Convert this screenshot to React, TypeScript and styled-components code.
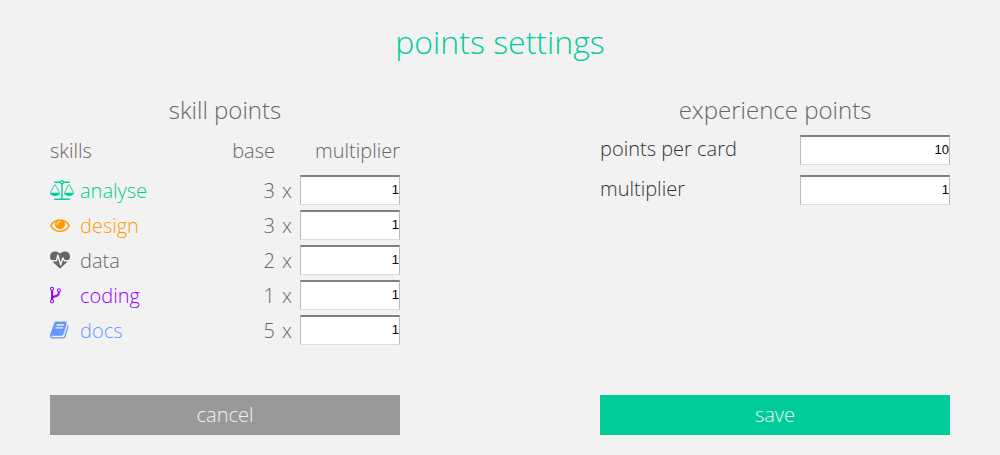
import React from 'react';
import styled, { createGlobalStyle } from 'styled-components';

const GlobalStyle = createGlobalStyle`
  * { box-sizing: border-box; }
  body {
    margin: 0;
    background: #f2f2f2;
    color: #666;
    font-family: "Open Sans", sans-serif;
    font-weight: 300;
    font-size: 20px;
    line-height: 28px;
  }
`;

const Page = styled.form`
  padding: 20px 50px;
`;

const Title = styled.h1`
  margin: 0 0 27px;
  color: #00cc99;
  font-size: 32px;
  font-weight: 300;
  line-height: 43px;
  text-align: center;
`;

const Columns = styled.div`
  display: grid;
  grid-template-columns: 1fr 1fr;
  column-gap: 200px;
`;

const Section = styled.section`
  min-height: 305px;
`;

const SectionTitle = styled.h2`
  margin: 0 0 5px;
  font-size: 24px;
  font-weight: 300;
  line-height: 40px;
  text-align: center;
`;

const Table = styled.table`
  width: 100%;
  border-collapse: collapse;
  table-layout: fixed;
  line-height: 32px;
`;

const Head = styled.th<{ $align?: string; $width?: number }>`
  width: ${({ $width }) => ($width ? `${$width}px` : 'auto')};
  height: 40px;
  padding: 0;
  font-weight: 300;
  text-align: ${({ $align }) => $align ?? 'left'};
  vertical-align: top;
`;

const Cell = styled.td`
  height: 35px;
  padding: 0;
  text-align: right;
  vertical-align: top;
`;

const Skill = styled.label<{ $color: string }>`
  display: grid;
  grid-template-columns: 30px 1fr;
  color: ${({ $color }) => $color};
  text-align: left;
`;

const Icon = styled.svg`
  height: 20px;
  margin-top: 5px;
  fill: currentColor;
`;

const Factor = styled.div`
  display: flex;
  justify-content: flex-end;
  gap: 8px;
`;

const NumberInput = styled.input<{ $width: number }>`
  display: block;
  width: ${({ $width }) => $width}px;
  height: 30px;
  margin: 0;
  padding: 0 0 2px;
  border: 1px solid #bbb;
  border-top: 2px solid #808080;
  border-bottom-color: #ddd;
  border-radius: 0;
  background: #fff;
  color: #000;
  font-family: "Liberation Sans", Arial, sans-serif;
  font-size: 13px;
  text-align: right;
`;

const Field = styled.div`
  display: flex;
  justify-content: space-between;
  margin-bottom: 10px;
  color: #333;
`;

const Button = styled.button<{ $color: string }>`
  height: 40px;
  padding: 0;
  border: 0;
  background: ${({ $color }) => $color};
  color: #f2f2f2;
  font: inherit;
  cursor: pointer;
`;

const skills = [
  {
    name: 'analyse',
    color: '#00cc99',
    base: 3,
    viewBox: '0 0 2176 1792',
    width: 24,
    path: 'M1728 448l-384 704h768zm-1280 0l-384 704h768zm821-192q-14 40-45.500 71.500t-71.500 45.500v1291h608q14 0 23 9t9 23v64q0 14-9 23t-23 9h-1344q-14 0-23-9t-9-23v-64q0-14 9-23t23-9h608v-1291q-40-14-71.500-45.500t-45.500-71.500h-491q-14 0-23-9t-9-23v-64q0-14 9-23t23-9h491q21-57 70-92.500t111-35.500 111 35.500 70 92.500h491q14 0 23 9t9 23v64q0 14-9 23t-23 9h-491zm-181 16q33 0 56.500-23.500t23.500-56.500-23.500-56.500-56.500-23.500-56.500 23.500-23.500 56.500 23.500 56.500 56.500 23.500zm1088 880q0 73-46.500 131t-117.500 91-144.500 49.500-139.500 16.500-139.500-16.500-144.500-49.500-117.500-91-46.500-131q0-11 35-81t92-174.500 107-195.500 102-184 56-100q18-33 56-33t56 33q4 7 56 100t102 184 107 195.500 92 174.500 35 81zm-1280 0q0 73-46.500 131t-117.500 91-144.500 49.500-139.500 16.500-139.500-16.500-144.500-49.500-117.500-91-46.500-131q0-11 35-81t92-174.500 107-195.500 102-184 56-100q18-33 56-33t56 33q4 7 56 100t102 184 107 195.500 92 174.500 35 81z',
  },
  {
    name: 'design',
    color: '#ff9900',
    base: 3,
    viewBox: '0 0 1792 1792',
    width: 20,
    path: 'M1664 960q-152-236-381-353 61 104 61 225 0 185-131.500 316.500t-316.500 131.500-316.500-131.500-131.500-316.500q0-121 61-225-229 117-381 353 133 205 333.500 326.500t434.500 121.500 434.500-121.500 333.500-326.500zm-720-384q0-20-14-34t-34-14q-125 0-214.500 89.500t-89.500 214.500q0 20 14 34t34 14 34-14 14-34q0-86 61-147t147-61q20 0 34-14t14-34zm848 384q0 34-20 69-140 230-376.500 368.500t-499.500 138.500-499.500-139-376.500-368q-20-35-20-69t20-69q140-229 376.500-368t499.500-139 499.500 139 376.500 368q20 35 20 69z',
  },
  {
    name: 'data',
    color: '#666666',
    base: 2,
    viewBox: '0 -128 1792 1792',
    width: 20,
    path: 'M1280 896h305q-5 6-10 10.500t-9 7.500l-3 4-623 600q-18 18-44 18t-44-18l-624-602q-5-2-21-20h369q22 0 39.500-13.500t22.500-34.500l70-281 190 667q6 20 23 33t39 13q21 0 38-13t23-33l146-485 56 112q18 35 57 35zm512-428q0 145-103 300h-369l-111-221q-8-17-25.500-27t-36.500-8q-45 5-56 46l-129 430-196-686q-6-20-23.500-33t-39.500-13-39 13.500-22 34.500l-116 464h-423q-103-155-103-300 0-220 127-344t351-124q62 0 126.500 21.500t120 58 95.500 68.500 76 68q36-36 76-68t95.500-68.500 120-58 126.500-21.500q224 0 351 124t127 344z',
  },
  {
    name: 'coding',
    color: '#9900ff',
    base: 1,
    viewBox: '384 0 1024 1792',
    width: 11,
    path: 'M672 1472q0-40-28-68t-68-28-68 28-28 68 28 68 68 28 68-28 28-68zm0-1152q0-40-28-68t-68-28-68 28-28 68 28 68 68 28 68-28 28-68zm640 128q0-40-28-68t-68-28-68 28-28 68 28 68 68 28 68-28 28-68zm96 0q0 52-26 96.500t-70 69.500q-2 287-226 414-67 38-203 81-128 40-169.500 71t-41.500 100v26q44 25 70 69.500t26 96.500q0 80-56 136t-136 56-136-56-56-136q0-52 26-96.500t70-69.500v-820q-44-25-70-69.500t-26-96.500q0-80 56-136t136-56 136 56 56 136q0 52-26 96.500t-70 69.500v497q54-26 154-57 55-17 87.500-29.500t70.500-31 59-39.500 40.500-51 28-69.500 8.500-91.500q-44-25-70-69.500t-26-96.500q0-80 56-136t136-56 136 56 56 136z',
  },
  {
    name: 'docs',
    color: '#6699ff',
    base: 5,
    viewBox: '0 0 1792 1792',
    width: 20,
    path: 'M1639 478q40 57 18 129l-275 906q-19 64-76.500 107.500t-122.500 43.500h-923q-77 0-148.500-53.500t-99.500-131.500q-24-67-2-127 0-4 3-27t4-37q1-8-3-21.500t-3-19.500q2-11 8-21t16.500-23.500 16.500-23.500q23-38 45-91.500t30-91.500q3-10 .5-30t-.5-28q3-11 17-28t17-23q21-36 42-92t25-90q1-9-2.500-32t.5-28q4-13 22-30.500t22-22.500q19-26 42.500-84.500t27.500-96.500q1-8-3-25.500t-2-26.500q2-8 9-18t18-23 17-21q8-12 16.500-30.500t15-35 16-36 19.500-32 26.500-23.500 36-11.500 47.500 5.500l-1 3q38-9 51-9h761q74 0 114 56t18 130l-274 906q-36 119-71.500 153.500t-128.500 34.500h-869q-27 0-38 15-11 16-1 43 24 70 144 70h923q29 0 56-15.500t35-41.500l300-987q7-22 5-57 38 15 59 43zm-1064 2q-4 13 2 22.500t20 9.500h608q13 0 25.500-9.500t16.500-22.500l21-64q4-13-2-22.500t-20-9.500h-608q-13 0-25.500 9.500t-16.500 22.500zm-83 256q-4 13 2 22.500t20 9.500h608q13 0 25.500-9.500t16.500-22.500l21-64q4-13-2-22.500t-20-9.500h-608q-13 0-25.500 9.500t-16.500 22.500z',
  },
];

export default function App() {
  return (
    <Page onSubmit={(e) => e.preventDefault()}>
      <GlobalStyle />
      <Title>points settings</Title>
      <Columns>
        <Section>
          <SectionTitle>skill points</SectionTitle>
          <Table>
            <thead>
              <tr>
                <Head>skills</Head>
                <Head $align="right" $width={75}>base</Head>
                <Head $align="right" $width={125}>multiplier</Head>
              </tr>
            </thead>
            <tbody>
              {skills.map(({ name, color, base, viewBox, width, path }) => (
                <tr key={name}>
                  <Cell>
                    <Skill htmlFor={name} $color={color}>
                      <Icon viewBox={viewBox} width={width} aria-hidden="true">
                        <path d={path} />
                      </Icon>
                      {name}
                    </Skill>
                  </Cell>
                  <Cell>{base}</Cell>
                  <Cell>
                    <Factor>
                      x
                      <NumberInput id={name} $width={100} inputMode="numeric" defaultValue="1" />
                    </Factor>
                  </Cell>
                </tr>
              ))}
            </tbody>
          </Table>
        </Section>
        <Section>
          <SectionTitle>experience points</SectionTitle>
          <Field>
            <label htmlFor="per-card">points per card</label>
            <NumberInput id="per-card" $width={150} inputMode="numeric" defaultValue="10" />
          </Field>
          <Field>
            <label htmlFor="multiplier">multiplier</label>
            <NumberInput id="multiplier" $width={150} inputMode="numeric" defaultValue="1" />
          </Field>
        </Section>
        <Button type="button" $color="#999999">cancel</Button>
        <Button type="submit" $color="#00cc99">save</Button>
      </Columns>
    </Page>
  );
}
